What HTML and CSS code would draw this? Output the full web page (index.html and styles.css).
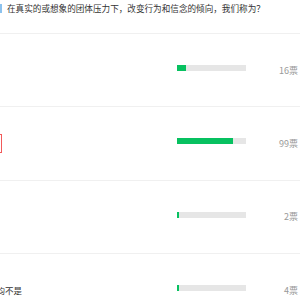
FILE: index.html
```html
<!DOCTYPE html>
<html lang="zh">
<head>
<meta charset="utf-8">
<link rel="stylesheet" href="styles.css">
</head>
<body>
<div class="poll">
  <div class="question">
    <span class="mark"></span>
    <span class="qtext">在真实的或想象的团体压力下，改变行为和信念的倾向，我们称为？</span>
  </div>
  <div class="row">
    <div class="label"><span class="opt">服从</span></div>
    <div class="track"><div class="fill" style="width:13.2%"></div></div>
    <div class="count">16票</div>
  </div>
  <div class="row">
    <div class="label"><span class="opt picked">从众</span></div>
    <div class="track"><div class="fill" style="width:81.8%"></div></div>
    <div class="count">99票</div>
  </div>
  <div class="row">
    <div class="label"><span class="opt">顺从</span></div>
    <div class="track"><div class="fill" style="width:2.6%"></div></div>
    <div class="count">2票</div>
  </div>
  <div class="row">
    <div class="label"><span class="opt">以上均不是</span></div>
    <div class="track"><div class="fill" style="width:3.6%"></div></div>
    <div class="count">4票</div>
  </div>
</div>
</body>
</html>
```
FILE: styles.css
```css
html, body {
  margin: 0;
  padding: 0;
  background: #fff;
  overflow: hidden;
}
body {
  font-family: "Noto Sans CJK SC", "Noto Sans", sans-serif;
  color: #333;
}
.poll {
  width: 300px;
}
.question {
  display: flex;
  align-items: flex-start;
  height: 34px;
  border-bottom: 1px solid #f0f0f0;
  box-sizing: border-box;
}
.mark {
  width: 2px;
  height: 9px;
  margin-top: 4px;
  background: #8cc2ee;
  flex: none;
}
.qtext {
  margin-left: 5px;
  font-size: 8.6px;
  line-height: 17px;
  white-space: nowrap;
  color: #333;
}
.row {
  display: flex;
  align-items: center;
  height: 73.33px;
  border-bottom: 1px solid #f0f0f0;
  box-sizing: border-box;
}
.label {
  flex: 1;
  min-width: 0;
  margin-left: -20.5px;
  font-size: 8.5px;
  line-height: 11px;
  white-space: nowrap;
}
.opt {
  display: inline-block;
  color: #333;
}
.picked {
  border: 1px solid #f25a5a;
  padding: 3px 4px;
  margin-left: -5px;
}
.track {
  width: 69px;
  height: 6px;
  background: #e6e6e6;
  flex: none;
  margin-bottom: 4px;
}
.fill {
  height: 100%;
  background: #07c160;
}
.count {
  width: 54px;
  flex: none;
  padding-right: 2px;
  box-sizing: border-box;
  text-align: right;
  font-size: 9px;
  color: #999;
}
```
